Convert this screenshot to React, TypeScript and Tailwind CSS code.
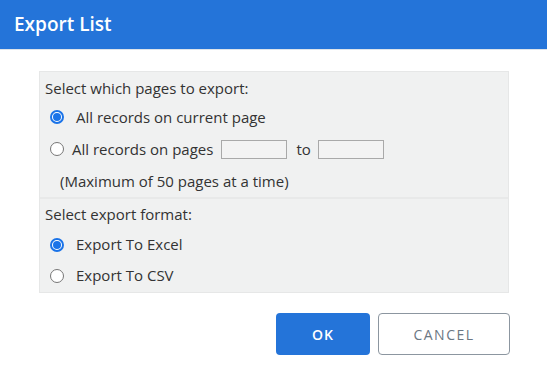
import React from 'react';

interface RadioProps {
  checked?: boolean;
}

const Radio: React.FC<RadioProps> = ({ checked = false }) => {
  return checked ? (
    <span className="w-[14px] h-[14px] rounded-full border-2 border-[#1a73e8] bg-white flex items-center justify-center shrink-0">
      <span className="w-[8px] h-[8px] rounded-full bg-[#1a73e8]" />
    </span>
  ) : (
    <span className="w-[14px] h-[14px] rounded-full border border-[#767676] bg-white shrink-0" />
  );
};

const App: React.FC = () => {
  return (
    <div
      className="w-[547px] h-[365px] bg-white text-[#333333] overflow-hidden"
      style={{ fontFamily: '"Open Sans", "Noto Sans", sans-serif' }}
    >
      <div className="h-[50px] bg-[#2474d9] border-b border-[#dde3ea] px-[14px] flex items-center">
        <h1 className="text-[19px] font-semibold text-white leading-none">Export List</h1>
      </div>

      <div className="mt-[21px] ml-[39px] w-[470px] bg-[#f0f1f1] border border-[#e6e7e7] text-[15px]">
        {/* pages */}
        <div className="pt-[7px] pl-[5px]">
          <div className="h-[18px] leading-[18px]">Select which pages to export:</div>
          <div className="mt-[4px] h-[32px] flex items-center pl-[5px]">
            <Radio checked />
            <span className="ml-[12px]">All records on current page</span>
          </div>
          <div className="h-[32px] flex items-center pl-[5px]">
            <Radio />
            <span className="ml-[8px]">All records on pages</span>
            <input className="ml-[8px] w-[66px] h-[19px] border border-[#a9a9a9] bg-[#f3f3f3]" />
            <span className="ml-[9px]">to</span>
            <input className="ml-[7px] w-[66px] h-[19px] border border-[#a9a9a9] bg-[#f3f3f3]" />
          </div>
          <div className="h-[32px] flex items-center pl-[15px]">
            (Maximum of 50 pages at a time)
          </div>
        </div>

        {/* format */}
        <div className="border-t-2 border-[#e8e9e9] pt-[6px] pb-[1px] pl-[5px]">
          <div className="h-[18px] leading-[18px]">Select export format:</div>
          <div className="mt-[6px] h-[31px] flex items-center pl-[5px]">
            <Radio checked />
            <span className="ml-[12px]">Export To Excel</span>
          </div>
          <div className="h-[31px] flex items-center pl-[5px]">
            <Radio />
            <span className="ml-[12px]">Export To CSV</span>
          </div>
        </div>
      </div>

      <div className="mt-[20px] mr-[37px] flex justify-end gap-[8px]">
        <button className="w-[94px] h-[42px] rounded-[4px] bg-[#2474d9] text-white text-[14px] font-semibold tracking-[1px]">
          OK
        </button>
        <button className="w-[132px] h-[42px] rounded-[4px] bg-white border border-[#8c96a0] text-[#6b7783] text-[14px] tracking-[1.5px]">
          CANCEL
        </button>
      </div>
    </div>
  );
};

export default App;
